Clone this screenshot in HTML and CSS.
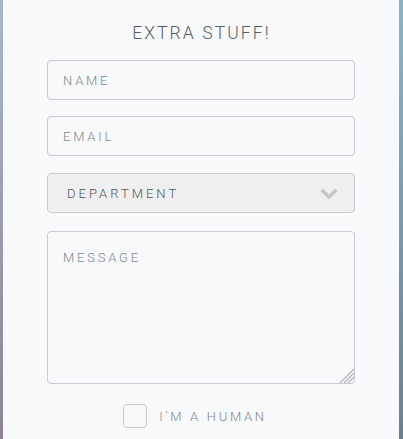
FILE: index.html
```
<!DOCTYPE html>
<html>
<head>
<meta charset="utf-8">
<link rel="stylesheet" href="styles.css">
</head>
<body>
<div class="card">
  <h2 class="title">EXTRA STUFF!</h2>
  <form class="form">
    <input class="field" type="text" placeholder="NAME">
    <input class="field field-email" type="text" placeholder="EMAIL">
    <div class="select">
      <span class="select-text">DEPARTMENT</span>
      <svg class="chev" width="16" height="10" viewBox="0 0 16 10"><polyline points="2,2 8,8 14,2" fill="none" stroke="#c4c5c6" stroke-width="3.4" stroke-linecap="square"/></svg>
    </div>
    <div class="message-wrap">
      <textarea class="message" placeholder="MESSAGE"></textarea>
      <svg class="grip" width="15" height="15" viewBox="0 0 15 15"><g stroke="#b4b6b8" stroke-width="1.3"><line x1="15" y1="1" x2="1" y2="15"/><line x1="15" y1="5" x2="5" y2="15"/><line x1="15" y1="9" x2="9" y2="15"/></g></svg>
    </div>
    <label class="human"><span class="box"></span><span class="human-text">I'M A HUMAN</span></label>
  </form>
</div>
</body>
</html>
```
FILE: styles.css
```
html, body { margin: 0; height: 100%; }
body {
  padding: 0 4px 0 3px;
  box-sizing: border-box;
  background:
    linear-gradient(#a9b8c6, #8d8395) left top / 3px 100% no-repeat,
    linear-gradient(#8ab5c5, #6b808d) right top / 4px 100% no-repeat,
    #f8f9fa;
  font-family: Roboto, "Open Sans", sans-serif;
  overflow: hidden;
}
.card {
  height: 100%;
  background: #f8f9fa;
  display: flex;
  flex-direction: column;
  align-items: center;
  padding-top: 21px;
  box-sizing: border-box;
}
.title {
  margin: 0;
  font-weight: 300;
  font-size: 17.5px;
  line-height: 24px;
  letter-spacing: 2.1px;
  color: #555d65;
  padding-left: 1px;
}
.form {
  width: 308px;
  margin-top: 15px;
  display: flex;
  flex-direction: column;
}
.field, .message, .select {
  box-sizing: border-box;
  width: 308px;
  border: 1px solid #c9ccd0;
  border-radius: 4px;
  background: #f8f9fa;
  font-family: Roboto, "Open Sans", sans-serif;
  font-weight: 300;
  font-size: 13px;
  letter-spacing: 2.8px;
  color: #5d656c;
  margin: 0;
  outline: none;
}
.field {
  height: 40px;
  padding: 0 15px;
}
.field-email { margin-top: 16px; }
.field::placeholder, .message::placeholder { color: #80878e; opacity: 1; }
.select {
  margin-top: 17px;
  height: 40px;
  background: #efefef;
  display: flex;
  align-items: center;
  justify-content: space-between;
  padding: 0 17px 0 19px;
  letter-spacing: 3px;
}
.select-text { color: #4f575f; }
.chev { display: block; margin-top: 1px; }
.message-wrap {
  position: relative;
  margin-top: 18px;
}
.message {
  height: 153px;
  padding: 18px 15px;
  resize: none;
  display: block;
}
.grip {
  position: absolute;
  right: 1px;
  bottom: 1px;
  display: block;
}
.human {
  margin-top: 20px;
  display: flex;
  align-items: center;
  justify-content: center;
  gap: 12px;
  padding-right: 12px;
}
.box {
  width: 24px;
  height: 24px;
  box-sizing: border-box;
  border: 1px solid #c7c9cb;
  border-radius: 4px;
  background: #f8f9fa;
}
.human-text {
  font-size: 13px;
  font-weight: 300;
  letter-spacing: 2.7px;
  color: #80878e;
}
```
